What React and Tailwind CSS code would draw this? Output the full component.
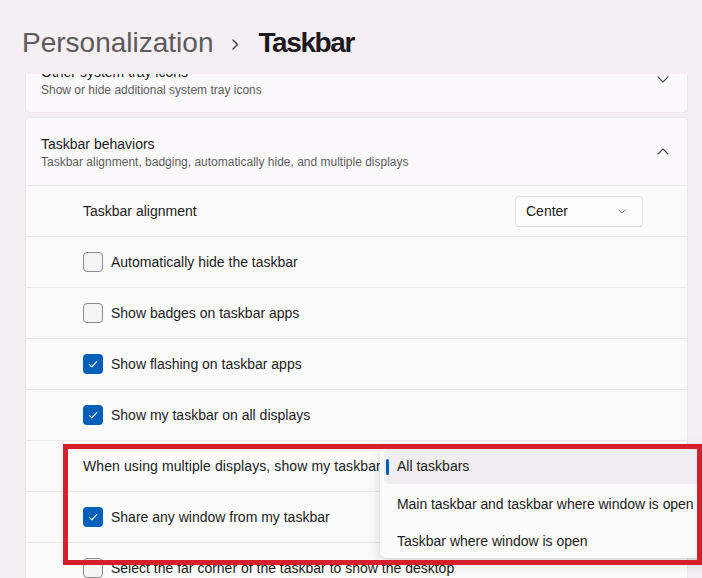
import React from 'react';

function ChevronDown({ className = '' }) {
  return (
    <svg className={className} width="12" height="7" viewBox="0 0 12 7" fill="none">
      <path d="M1 1l5 5 5-5" stroke="currentColor" strokeWidth="1.1" strokeLinecap="round" strokeLinejoin="round" />
    </svg>
  );
}

function ChevronUp({ className = '' }) {
  return (
    <svg className={className} width="12" height="7" viewBox="0 0 12 7" fill="none">
      <path d="M1 6l5-5 5 5" stroke="currentColor" strokeWidth="1.1" strokeLinecap="round" strokeLinejoin="round" />
    </svg>
  );
}

function Checkbox({ checked }) {
  if (checked) {
    return (
      <span className="w-5 h-5 shrink-0 rounded-[4px] bg-[#005fb8] flex items-center justify-center">
        <svg width="12" height="12" viewBox="0 0 12 12" fill="none">
          <path d="M2.3 6.3l2.6 2.5 4.8-5.2" stroke="white" strokeWidth="1.1" strokeLinecap="round" strokeLinejoin="round" />
        </svg>
      </span>
    );
  }
  return <span className="w-5 h-5 shrink-0 rounded-[4px] border border-[#8b8b8b] bg-[#f6f5f6]" />;
}

function Row({ children }) {
  return (
    <div className="h-[51px] border-t border-[#ebe6ea] bg-[#fcfbfc] flex items-center pl-[57px] pr-[44px] text-[14px] text-[#1b1b1b]">
      {children}
    </div>
  );
}

function CheckRow({ checked, label }) {
  return (
    <Row>
      <div className="flex items-center gap-[8px]">
        <Checkbox checked={checked} />
        <span className="whitespace-nowrap">{label}</span>
      </div>
    </Row>
  );
}

export default function App() {
  return (
    <div className="relative w-[702px] h-[578px] overflow-hidden bg-[#f5eef3] font-['Liberation_Sans',Arial,sans-serif]">
      {/* Header */}
      <div className="h-[74px] pl-[22px] pt-[29px] flex items-start">
        <span className="text-[28px] leading-[28px] text-[#5c5a5c]">Personalization</span>
        <svg className="mx-[18px] mt-[10px] text-[#4a484a]" width="9" height="11" viewBox="0 0 9 11" fill="none">
          <path d="M2 1l4.5 4.5L2 10" stroke="currentColor" strokeWidth="1.5" strokeLinecap="round" strokeLinejoin="round" />
        </svg>
        <span className="text-[28px] leading-[28px] font-bold tracking-[-1.4px] text-[#1c1a1c]">Taskbar</span>
      </div>

      {/* Scroll area */}
      <div className="h-[504px] overflow-hidden pl-[25px] pr-[14px]">
        <div className="mt-[-28px]">
          {/* Other system tray icons */}
          <div className="h-[67px] rounded-[4px] border border-[#ebe6ea] bg-[#fbf9fb] flex items-center justify-between pl-[15px] pr-[18px]">
            <div className="flex flex-col">
              <span className="text-[14px] leading-[20px] text-[#1b1b1b]">Other system tray icons</span>
              <span className="text-[12px] leading-[16px] text-[#5f5d5f]">Show or hide additional system tray icons</span>
            </div>
            <ChevronDown className="text-[#4a4a4a]" />
          </div>

          {/* Taskbar behaviors */}
          <div className="mt-[4px] rounded-[4px] border border-[#ebe6ea] bg-[#fbf9fb] overflow-hidden">
            <div className="h-[67px] flex items-center justify-between pl-[15px] pr-[18px]">
              <div className="flex flex-col">
                <span className="text-[14px] leading-[20px] text-[#1b1b1b]">Taskbar behaviors</span>
                <span className="text-[12px] leading-[16px] text-[#5f5d5f]">
                  Taskbar alignment, badging, automatically hide, and multiple displays
                </span>
              </div>
              <ChevronUp className="text-[#4a4a4a]" />
            </div>

            <Row>
              <div className="flex-1 flex items-center justify-between">
                <span>Taskbar alignment</span>
                <div className="w-[128px] h-[31px] rounded-[4px] border border-[#e6e4e6] border-b-[#d6d4d6] bg-[#fefefe] flex items-center justify-between pl-[10px] pr-[16px]">
                  <span>Center</span>
                  <svg width="8" height="5" viewBox="0 0 8 5" fill="none" className="text-[#6e6e6e]">
                    <path d="M0.8 0.8l3.2 3.2 3.2-3.2" stroke="currentColor" strokeWidth="0.9" strokeLinecap="round" strokeLinejoin="round" />
                  </svg>
                </div>
              </div>
            </Row>
            <CheckRow checked={false} label="Automatically hide the taskbar" />
            <CheckRow checked={false} label="Show badges on taskbar apps" />
            <CheckRow checked label="Show flashing on taskbar apps" />
            <CheckRow checked label="Show my taskbar on all displays" />
            <Row>
              <span className="whitespace-nowrap tracking-[0.1px]">When using multiple displays, show my taskbar apps on</span>
            </Row>
            <CheckRow checked label="Share any window from my taskbar" />
            <CheckRow checked={false} label="Select the far corner of the taskbar to show the desktop" />
          </div>
        </div>
      </div>

      {/* Dropdown menu */}
      <div className="absolute left-[380px] top-[446px] w-[340px] h-[112px] rounded-l-[7px] bg-[#fbfbfb] shadow-[0_4px_14px_rgba(0,0,0,0.16)] pt-[3px] px-[4px] text-[14px] text-[#1b1b1b]">
        <div className="relative h-[35px] rounded-[4px] bg-[#f0eef0] flex items-center pl-[13px] whitespace-nowrap">
          <span className="absolute left-[2px] top-[10px] h-[16px] w-[3px] rounded-full bg-[#005fb8]" />
          All taskbars
        </div>
        <div className="mt-[3px] h-[35px] rounded-[4px] flex items-center pl-[13px] whitespace-nowrap tracking-[-0.05px]">
          Main taskbar and taskbar where window is open
        </div>
        <div className="mt-[2px] h-[35px] rounded-[4px] flex items-center pl-[13px] whitespace-nowrap">
          Taskbar where window is open
        </div>
      </div>

      {/* Red highlight annotation */}
      <div className="absolute left-[63px] top-[444px] w-[639px] h-[121px] border-[5px] border-[#d71f2b]" />
    </div>
  );
}
